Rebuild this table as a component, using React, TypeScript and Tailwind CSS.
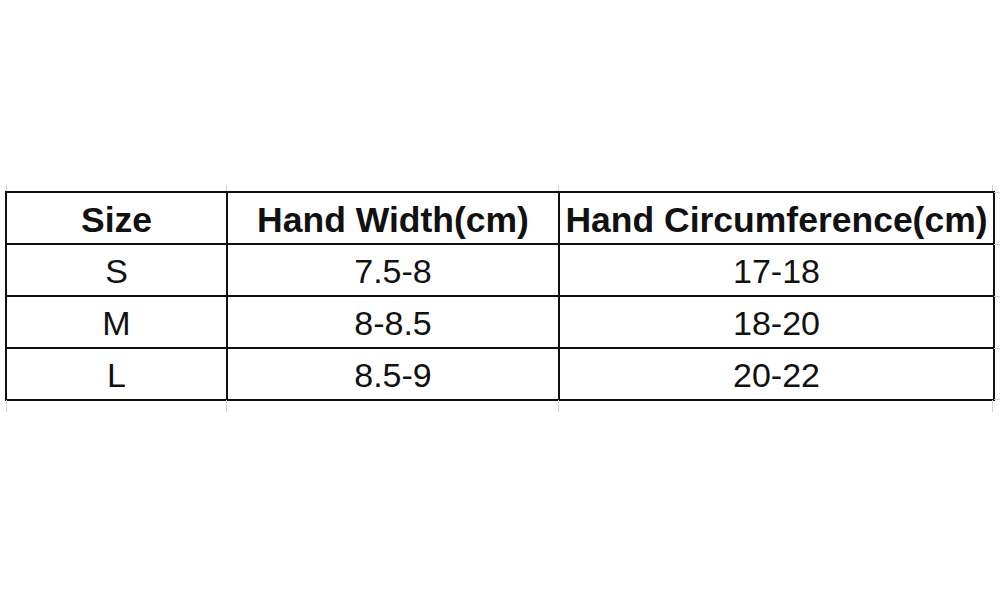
import React from 'react';

const rows = [
  { size: 'S', width: '7.5-8', circ: '17-18' },
  { size: 'M', width: '8-8.5', circ: '18-20' },
  { size: 'L', width: '8.5-9', circ: '20-22' },
];

// faint spreadsheet gridline stubs sticking out of the table
const vStubs = [6, 226, 558, 992];
const hStubs = [192, 244, 296, 348, 399];

export default function App() {
  return (
    <div
      className="relative w-[1000px] h-[600px] bg-white text-[#111]"
      style={{ fontFamily: '"Liberation Sans", Arial, sans-serif' }}
    >
      <div className="pt-[191px] pl-[5px]">
        <table className="border-collapse table-fixed w-[988px]">
          <colgroup>
            <col className="w-[221px]" />
            <col className="w-[332px]" />
            <col className="w-[435px]" />
          </colgroup>
          <thead>
            <tr className="h-[52px]">
              <th className="border-2 border-[#111] text-[35.5px] font-bold leading-none text-center align-middle p-0 pt-[5px]">Size</th>
              <th className="border-2 border-[#111] text-[35.5px] font-bold leading-none text-center align-middle p-0 pt-[5px]">Hand Width(cm)</th>
              <th className="border-2 border-[#111] text-[35.5px] font-bold leading-none text-center align-middle p-0 pt-[5px] whitespace-nowrap">Hand Circumference(cm)</th>
            </tr>
          </thead>
          <tbody>
            {rows.map((r) => (
              <tr key={r.size} className="h-[52px]">
                <td className="border-2 border-[#111] text-[34px] leading-none text-center align-middle p-0 pt-[2px]">{r.size}</td>
                <td className="border-2 border-[#111] text-[34px] leading-none text-center align-middle p-0 pt-[2px]">{r.width}</td>
                <td className="border-2 border-[#111] text-[34px] leading-none text-center align-middle p-0 pt-[2px]">{r.circ}</td>
              </tr>
            ))}
          </tbody>
        </table>
      </div>

      {vStubs.map((x) => (
        <React.Fragment key={x}>
          <div className="absolute w-px h-[12px] bg-[#d4d4d8] top-[400px]" style={{ left: x }} />
          <div className="absolute w-px h-[6px] bg-[#d4d4d8] top-[185px]" style={{ left: x }} />
        </React.Fragment>
      ))}
      {hStubs.map((y) => (
        <div key={y} className="absolute h-px w-[6px] bg-[#d4d4d8] left-[994px]" style={{ top: y }} />
      ))}
    </div>
  );
}
